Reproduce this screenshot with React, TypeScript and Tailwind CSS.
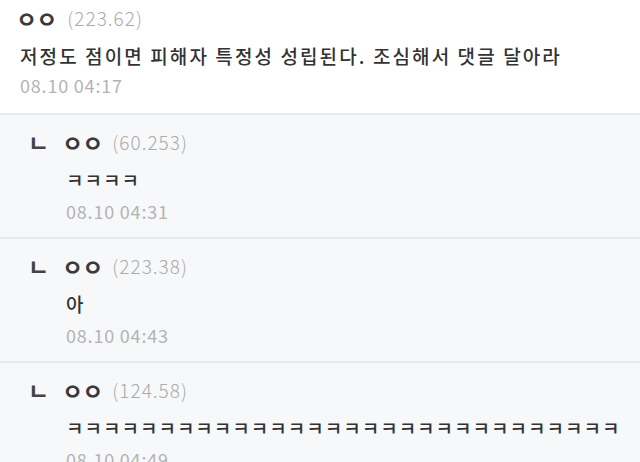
import React from "react";

const font = { fontFamily: '"Noto Sans CJK KR", "Noto Sans", sans-serif' };

function Header({ nick, ip, reply }: { nick: string; ip: string; reply?: boolean }) {
  return (
    <div className={reply ? "flex items-center h-[26px]" : "flex items-center h-[26px] -ml-[4px]"}>
      {reply && <span className="ml-[8px] w-[23px] text-[23px] leading-[26px] font-bold text-[#444]">ㄴ</span>}
      <span className={reply ? "ml-[11px] text-[23px] leading-[26px] font-bold text-[#3a3a3a] tracking-[-1px]" : "text-[23px] leading-[26px] font-bold text-[#3a3a3a] tracking-[-1px]"}>{nick}</span>
      <span className={reply ? "ml-[10px] text-[19px] text-[#ababab] font-light tracking-[1px]" : "ml-[11px] text-[19px] text-[#ababab] font-light tracking-[1px]"}>{ip}</span>
    </div>
  );
}

function Reply({ ip, text, date }: { ip: string; text: string; date: string }) {
  return (
    <div className="bg-[#f7f8fa] pl-[20px] pt-[14px] pb-[12px] border-b-2 border-[#e8e9ed] h-[124px]">
      <Header nick="ㅇㅇ" ip={ip} reply />
      <div className="pl-[46px] mt-[10px] h-[30px] flex items-center text-[19px] font-medium text-[#333] tracking-[1px] whitespace-nowrap">{text}</div>
      <div className="pl-[46px] mt-[2px] h-[28px] flex items-center text-[18px] text-[#b3b3b3] tracking-[0.8px]">{date}</div>
    </div>
  );
}

export default function App() {
  return (
    <div className="w-[640px] h-[462px] overflow-hidden bg-white" style={font}>
      <div className="bg-white pl-[20px] pt-[5px] border-b-2 border-[#e8e9ed] h-[115px]">
        <Header nick="ㅇㅇ" ip="(223.62)" />
        <div className="mt-[10px] h-[30px] flex items-center text-[19px] font-medium text-[#333] tracking-[2.1px] whitespace-nowrap">
          저정도 점이면 피해자 특정성 성립된다. 조심해서 댓글 달아라
        </div>
        <div className="h-[28px] flex items-center text-[18px] text-[#b3b3b3] tracking-[0.8px]">08.10 04:17</div>
      </div>
      <Reply ip="(60.253)" text="ㅋㅋㅋㅋ" date="08.10 04:31" />
      <Reply ip="(223.38)" text="아" date="08.10 04:43" />
      <Reply ip="(124.58)" text="ㅋㅋㅋㅋㅋㅋㅋㅋㅋㅋㅋㅋㅋㅋㅋㅋㅋㅋㅋㅋㅋㅋㅋㅋㅋㅋㅋㅋㅋㅋ" date="08.10 04:49" />
    </div>
  );
}
